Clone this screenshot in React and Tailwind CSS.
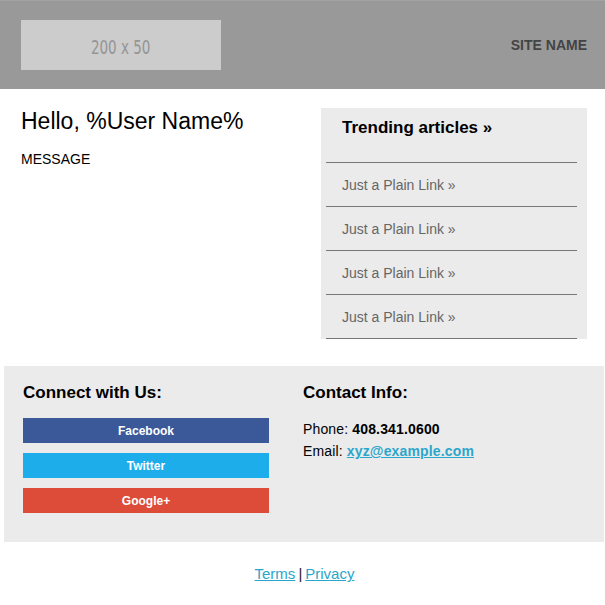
export default function App() {
  const links = [1, 2, 3, 4];
  return (
    <div className="w-[605px] bg-white" style={{ fontFamily: '"Liberation Sans", Arial, sans-serif' }}>
      <header className="h-[89px] bg-[#999999] border-t border-[#a3a3a3] flex items-center justify-between pl-[21px] pr-[18px]">
        <div className="w-[200px] h-[50px] bg-[#cccccc] flex items-center justify-center text-[#959595]">
          <span className="text-[19px] leading-[20px] scale-x-[0.79] inline-block mt-[3px] -ml-[1px]" style={{ fontFamily: '"DejaVu Sans Condensed", "DejaVu Sans", sans-serif' }}>200 x 50</span>
        </div>
        <div className="text-[14px] font-bold text-[#444444]">SITE NAME</div>
      </header>

      <main className="flex justify-between pl-[21px] pr-[18px] pt-[19px] pb-[27px]">
        <div>
          <h1 className="text-[23px] leading-[24px] text-black mt-[1px]">Hello, %User Name%</h1>
          <p className="text-[14px] leading-[16px] text-black mt-[18px]">MESSAGE</p>
        </div>
        <aside className="w-[266px] bg-[#ebebeb] pl-[5px] pr-[10px]">
          <div className="h-[55px] border-b border-[#777777] pl-[16px] pt-[8px]">
            <span className="text-[17px] leading-[20px] font-bold text-black">Trending articles »</span>
          </div>
          {links.map((i) => (
            <div key={i} className="h-[44px] border-b border-[#777777] pl-[16px] pt-[1px] flex items-center">
              <a className="text-[14px] text-[#666666]">Just a Plain Link »</a>
            </div>
          ))}
        </aside>
      </main>

      <footer className="ml-[4px] mr-[1px] bg-[#ebebeb] h-[176px] pl-[19px] pt-[17px] flex">
        <div className="w-[280px]">
          <h3 className="text-[17px] leading-[20px] font-bold text-black">Connect with Us:</h3>
          <div className="mt-[15px] flex flex-col gap-[10px] w-[246px]">
            <div className="h-[25px] bg-[#3b5998] text-white text-[12px] font-bold flex items-center justify-center">Facebook</div>
            <div className="h-[25px] bg-[#1dadeb] text-white text-[12px] font-bold flex items-center justify-center">Twitter</div>
            <div className="h-[25px] bg-[#dd4b39] text-white text-[12px] font-bold flex items-center justify-center">Google+</div>
          </div>
        </div>
        <div>
          <h3 className="text-[17px] leading-[20px] font-bold text-black">Contact Info:</h3>
          <div className="mt-[15px] text-[14px] leading-[22px] text-black tracking-[0.15px]">
            <p>Phone: <b>408.341.0600</b></p>
            <p>Email: <a className="font-bold text-[#2ba6cb] underline">xyz@example.com</a></p>
          </div>
        </div>
      </footer>

      <div className="h-[63px] pt-[2px] pl-[4px] flex items-center justify-center text-[15px] text-[#222222]">
        <a className="text-[#2ba6cb] underline">Terms</a>
        <span className="mx-[3px]">|</span>
        <a className="text-[#2ba6cb] underline">Privacy</a>
      </div>
    </div>
  );
}
